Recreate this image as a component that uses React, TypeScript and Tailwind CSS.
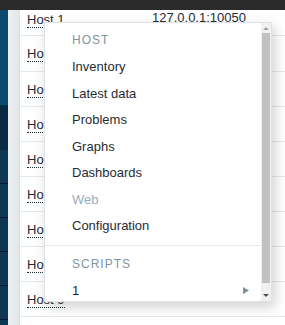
import React from 'react';

const hostRows = ['Host 1', 'Host 2', 'Host 3', 'Host 4', 'Host 5', 'Host 6', 'Host 7', 'Host 8', 'Host 9'];

const hostItems = [
  { label: 'Inventory' },
  { label: 'Latest data' },
  { label: 'Problems' },
  { label: 'Graphs' },
  { label: 'Dashboards' },
  { label: 'Web', disabled: true },
  { label: 'Configuration' },
];

function Sidebar() {
  return (
    <div className="w-[8px] flex flex-col shrink-0">
      <div className="h-[95px] bg-[#0b4a6e]" />
      <div className="h-[45px] bg-[#092a40]" />
      {[0, 1, 2, 3, 4, 5].map((i) => (
        <div key={i} className="h-[34px] bg-[#0e3755] border-b border-[#06192a]" />
      ))}
    </div>
  );
}

function HostTable() {
  return (
    <div className="flex-1 bg-white">
      {hostRows.map((name, i) => (
        <div
          key={name}
          className={`flex items-start border-b border-[#e6e9ec] ${i === 0 ? 'h-[26px] pt-0' : i === 1 ? 'h-[36px] pt-[8px]' : 'h-[35px] pt-[8px]'}`}
        >
          <div className="w-[132px] pl-[7px]">
            <span className="inline-block leading-[15px] border-b border-dotted border-[#1f2c33] text-[#1f2c33]">{name}</span>
          </div>
          <div className="leading-[16px] text-[#1f2c33]">127.0.0.1:10050</div>
        </div>
      ))}
    </div>
  );
}

function MenuHeader({ children }: { children: React.ReactNode }) {
  return (
    <div className="h-[26.5px] flex items-center pl-[27px] text-[12px] tracking-[1px] text-[#7f93a3]">{children}</div>
  );
}

function ContextMenu() {
  return (
    <div className="absolute left-[44px] top-[22px] w-[228px] h-[280px] bg-white border border-[#dde2e6] shadow-[3px_5px_12px_rgba(0,0,0,0.18)] flex">
      <div className="flex-1 overflow-hidden pt-[4px]">
        <MenuHeader>HOST</MenuHeader>
        {hostItems.map((item) => (
          <div
            key={item.label}
            className={`h-[26.5px] flex items-center pl-[27px] ${item.disabled ? 'text-[#9aabb9]' : 'text-[#1f2c33]'}`}
          >
            {item.label}
          </div>
        ))}
        <div className="mt-[6px] border-t border-[#e6e9ec] mb-[5px]" />
        <MenuHeader>SCRIPTS</MenuHeader>
        <div className="h-[26.5px] flex items-center justify-between pl-[27px] pr-[12px] text-[#1f2c33]">
          <span>1</span>
          <svg width="6" height="7" viewBox="0 0 6 7">
            <path d="M0 0 L6 3.5 L0 7 Z" fill="#7d8f9c" />
          </svg>
        </div>
      </div>
      <div className="w-[10px] bg-[#f1f1f1] flex flex-col items-center">
        <div className="h-[10px] flex items-center justify-center">
          <svg width="6" height="3" viewBox="0 0 6 3">
            <path d="M0 3 L3 0 L6 3 Z" fill="#a3a3a3" />
          </svg>
        </div>
        <div className="w-[8px] h-[250px] bg-[#c1c1c1]" />
        <div className="flex-1 flex items-end justify-center pb-[4px]">
          <svg width="6" height="3" viewBox="0 0 6 3">
            <path d="M0 0 L6 0 L3 3 Z" fill="#505050" />
          </svg>
        </div>
      </div>
    </div>
  );
}

export default function App() {
  return (
    <div className="relative w-[285px] h-[325px] overflow-hidden bg-white text-[13px] font-['Liberation_Sans',Arial,sans-serif]">
      <div className="h-[10px] bg-[#2b2b2b]" />
      <div className="flex">
        <Sidebar />
        <div className="w-[12px] shrink-0 bg-gradient-to-r from-[#eef1f3] to-[#e2e7ea] border-r border-[#d9dfe3]" />
        <HostTable />
      </div>
      <ContextMenu />
    </div>
  );
}
